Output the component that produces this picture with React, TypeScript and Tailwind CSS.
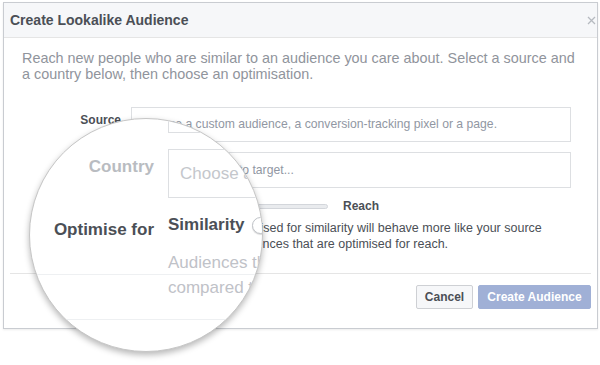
import React from 'react';

// Facebook-style "Create Lookalike Audience" dialog with a magnifier lens over the form
const font = "font-['Liberation_Sans',Arial,sans-serif]";

const Magnifier = () => (
  <div className="absolute left-[29px] top-[118px] w-[234px] h-[234px] rounded-full overflow-hidden bg-white border border-[#c6c6c6] shadow-[0_3px_6px_rgba(0,0,0,0.28)]">
    {/* faint magnified dividers */}
    <div className="absolute inset-x-0 top-[155px] h-px bg-[#eef0f2]"></div>
    <div className="absolute inset-x-0 top-[200px] h-px bg-[#eef0f2]"></div>

    <div className="relative w-[700px] flex flex-col">
      <div className="ml-[138px] -mt-[36px] h-[50px] w-[500px] border border-[#dddfe2]"></div>

      <div className="mt-[16px] flex gap-[14px]">
        <div className="w-[124px] shrink-0 text-right pt-[8px] text-[17px] leading-[20px] font-bold text-[#b9bcc1]">Country</div>
        <div className="h-[49px] w-[500px] border border-[#dddfe2] flex items-center pl-[11px] text-[17px] text-[#c4c7cc]">
          Choose a country to target...
        </div>
      </div>

      <div className="mt-[17px] flex gap-[14px]">
        <div className="w-[124px] shrink-0 text-right pt-[5px] text-[17px] leading-[20px] font-bold text-[#4b4f56]">Optimise for</div>
        <div className="flex items-center h-[20px]">
          <span className="text-[17px] leading-[20px] font-bold text-[#4b4f56]">Similarity</span>
          <div className="ml-[7px] w-[17px] h-[17px] rounded-full bg-white border border-[#bfc2c7] shadow-[0_1px_1px_rgba(0,0,0,0.15)]"></div>
          <div className="w-[200px] h-[7px] rounded-full bg-[#e9ebee] border border-[#d3d6db]"></div>
        </div>
      </div>

      <div className="mt-[10px] ml-[138px] text-[17px] leading-[25px] text-[#bfc2c8] whitespace-nowrap">
        <div>Audiences that are optimised for similarity</div>
        <div>compared to audiences that are optimised for reach.</div>
      </div>
    </div>
  </div>
);

export default function App() {
  return (
    <div className={`relative w-[600px] h-[365px] bg-white overflow-hidden ${font}`}>
      <div className="ml-[3px] mt-[2px] w-[595px] h-[327px] border border-[#c9ccd1] flex flex-col shadow-[0_1px_2px_rgba(0,0,0,0.08)]">
        <div className="h-[35px] shrink-0 bg-[#f6f7f9] border-b border-[#e5e5e5] flex items-center justify-between pl-[6px] pr-[1px]">
          <span className="text-[14px] font-bold text-[#4b4f56]">Create Lookalike Audience</span>
          <svg width="9" height="9" viewBox="0 0 9 9" className="mt-[1px]">
            <path d="M1 1L8 8M8 1L1 8" stroke="#b6bac0" strokeWidth="1.3" />
          </svg>
        </div>

        <div className="pl-[18px] flex flex-col">
          <p className="pt-[12px] text-[14.4px] leading-[16px] text-[#90949c] whitespace-nowrap">
            Reach new people who are similar to an audience you care about. Select a source and
            <br />
            a country below, then choose an optimisation.
          </p>

          <div className="mt-[25px] flex gap-[10px]">
            <div className="w-[99px] text-right pt-[5px] text-[12px] leading-[16px] font-bold text-[#4b4f56]">Source</div>
            <div className="h-[35px] w-[440px] border border-[#dddfe2] flex items-center pl-[8px] text-[12.2px] text-[#9197a3]">
              Choose a custom audience, a conversion-tracking pixel or a page.
            </div>
          </div>

          <div className="mt-[10px] flex gap-[10px]">
            <div className="w-[99px] text-right pt-[8px] text-[12px] leading-[16px] font-bold text-[#b9bcc1]">Country</div>
            <div className="h-[36px] w-[440px] border border-[#dddfe2] flex items-center pl-[8px] text-[12.2px] text-[#9197a3]">
              Choose a country to target...
            </div>
          </div>

          <div className="mt-[10px] flex gap-[10px]">
            <div className="w-[99px] text-right text-[12px] leading-[16px] font-bold text-[#4b4f56]">Optimise for</div>
            <div className="flex items-center h-[16px]">
              <span className="text-[12px] font-bold text-[#4b4f56]">Similarity</span>
              <div className="ml-[8px] w-[135px] h-[5px] rounded-full bg-[#e9ebee] border border-[#d3d6db]"></div>
              <span className="ml-[15px] text-[12px] font-bold text-[#4b4f56]">Reach</span>
            </div>
          </div>

          <div className="mt-[6px] ml-[146px] text-[12.5px] leading-[16px] text-[#4b4f56] whitespace-nowrap">
            <div>Audiences optimised for similarity will behave more like your source</div>
            <div className="-ml-[9px]">compared to audiences that are optimised for reach.</div>
          </div>
        </div>

        <div className="mt-[21px] mx-[6px] h-px bg-[#e5e5e5]"></div>

        <div className="mt-[11px] pr-[6px] flex justify-end gap-[5px]">
          <button className="h-[24px] w-[57px] bg-[#f6f7f9] border border-[#ced0d4] rounded-[2px] text-[12px] font-bold text-[#4b4f56]">
            Cancel
          </button>
          <button className="h-[24px] w-[113px] bg-[#a0b0d6] border border-[#a0b0d6] rounded-[2px] text-[12px] font-bold text-white">
            Create Audience
          </button>
        </div>
      </div>

      <Magnifier />
    </div>
  );
}
